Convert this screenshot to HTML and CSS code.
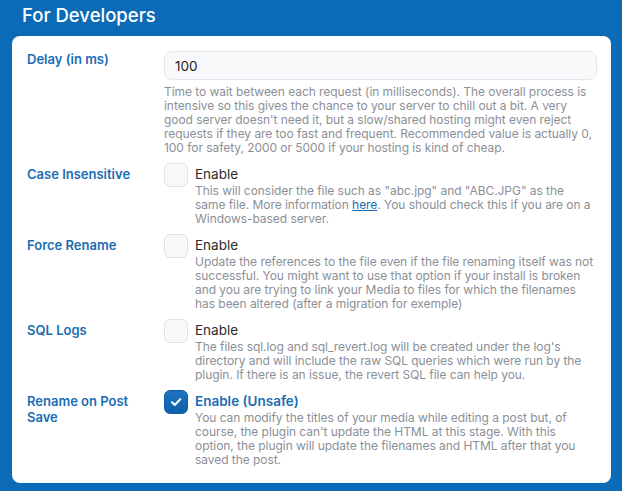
FILE: index.html
```html
<!DOCTYPE html>
<html lang="en">
<head>
<meta charset="utf-8">
<title>For Developers</title>
<link rel="stylesheet" href="styles.css">
</head>
<body>
<div class="panel">
  <h2 class="panel-title">For Developers</h2>
  <div class="card">
    <div class="row row-first">
      <div class="label">Delay (in ms)</div>
      <div class="field">
        <input class="text-input" type="text" value="100">
        <p class="desc">Time to wait between each request (in milliseconds). The overall process is intensive so this gives the chance to your server to chill out a bit. A very good server doesn't need it, but a slow/shared hosting might even reject requests if they are too fast and frequent. Recommended value is actually 0, 100 for safety, 2000 or 5000 if your hosting is kind of cheap.</p>
      </div>
    </div>

    <div class="row">
      <div class="label">Case Insensitive</div>
      <div class="field check-field">
        <span class="checkbox"></span>
        <div class="check-text">
          <div class="check-label">Enable</div>
          <p class="desc">This will consider the file such as "abc.jpg" and "ABC.JPG" as the same file. More information <a href="#">here</a>. You should check this if you are on a Windows-based server.</p>
        </div>
      </div>
    </div>

    <div class="row">
      <div class="label">Force Rename</div>
      <div class="field check-field">
        <span class="checkbox"></span>
        <div class="check-text">
          <div class="check-label">Enable</div>
          <p class="desc">Update the references to the file even if the file renaming itself was not successful. You might want to use that option if your install is broken and you are trying to link your Media to files for which the filenames has been altered (after a migration for exemple)</p>
        </div>
      </div>
    </div>

    <div class="row">
      <div class="label">SQL Logs</div>
      <div class="field check-field">
        <span class="checkbox"></span>
        <div class="check-text">
          <div class="check-label">Enable</div>
          <p class="desc">The files sql.log and sql_revert.log will be created under the log's directory and will include the raw SQL queries which were run by the plugin. If there is an issue, the revert SQL file can help you.</p>
        </div>
      </div>
    </div>

    <div class="row">
      <div class="label">Rename on Post<br>Save</div>
      <div class="field check-field">
        <span class="checkbox checked">
          <svg viewBox="0 0 24 24" width="24" height="24"><path d="M8 12.2l2.8 2.8 5.4-5.7" fill="none" stroke="#fff" stroke-width="2" stroke-linecap="round" stroke-linejoin="round"/></svg>
        </span>
        <div class="check-text">
          <div class="check-label strong">Enable (Unsafe)</div>
          <p class="desc">You can modify the titles of your media while editing a post but, of course, the plugin can't update the HTML at this stage. With this option, the plugin will update the filenames and HTML after that you saved the post.</p>
        </div>
      </div>
    </div>
  </div>
</div>
</body>
</html>
```
FILE: styles.css
```css
html, body {
  margin: 0;
  padding: 0;
}
body {
  background: #0b6bb7;
  font-family: Inter, "Liberation Sans", Arial, sans-serif;
  width: 622px;
  height: 491px;
  overflow: hidden;
}
.panel {
  padding: 0 11px 0 12px;
}
.panel-title {
  margin: 0;
  padding: 2px 0 0 10px;
  height: 36px;
  box-sizing: border-box;
  font-size: 18.5px;
  font-weight: 500;
  color: #fff;
  line-height: 26px;
}
.card {
  background: #fff;
  border-radius: 8px;
  padding: 15px 14px 15px 15px;
  height: 447px;
  box-sizing: border-box;
}
.row {
  display: grid;
  grid-template-columns: 137px 1fr;
  margin-top: 8px;
}
.row-first {
  margin-top: 0;
}
.label {
  color: #1a6db5;
  font-size: 13px;
  font-weight: 560;
  line-height: 16px;
  padding-top: 3px;
}
.row-first .label {
  padding-top: 0;
}
.text-input {
  display: block;
  width: 100%;
  height: 29px;
  box-sizing: border-box;
  border: 1px solid #e3e6ea;
  border-radius: 8px;
  background: #f8f9fa;
  padding: 0 10px;
  font-family: inherit;
  font-size: 13.5px;
  color: #1d1d1f;
  margin: 0 0 5px;
  outline: none;
}
.desc {
  margin: 0;
  color: #8b9098;
  font-size: 12px;
  letter-spacing: -0.05px;
  line-height: 14px;
}
.desc a {
  color: #1a6db5;
}
.check-field {
  display: flex;
  gap: 7px;
  align-items: flex-start;
}
.checkbox {
  flex: none;
  width: 24px;
  height: 24px;
  box-sizing: border-box;
  border: 1px solid #dfe3e8;
  border-radius: 6px;
  background: #f7f8fa;
}
.checkbox.checked {
  background: linear-gradient(#1f74bf, #0e5ea8);
  border-color: #0e5ea8;
}
.checkbox svg {
  display: block;
  margin: -1px;
}
.check-text {
  padding-top: 3px;
  flex: 1;
}
.check-label {
  font-size: 13.5px;
  line-height: 16px;
  color: #2b2b2b;
  margin-bottom: 2px;
}
.check-label.strong {
  color: #1a6db5;
  font-weight: 600;
}
```
